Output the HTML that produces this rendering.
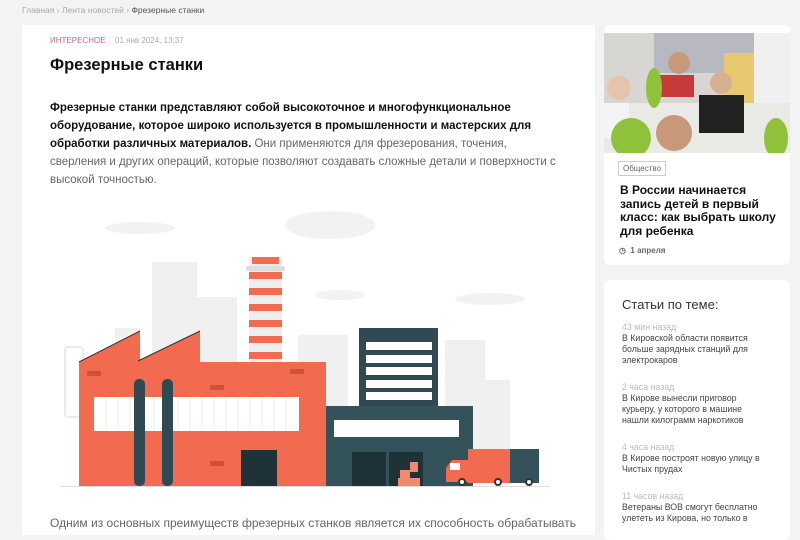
<!DOCTYPE html>
<html><head><meta charset="utf-8"><style>
*{margin:0;padding:0;box-sizing:border-box}
body{width:800px;height:526px;overflow:hidden;background:#f3f3f3;font-family:"Liberation Sans",sans-serif;position:relative}
.abs{position:absolute}
.crumb{left:22px;top:5px;font-size:8.5px;color:#aaa}
.crumb b{font-weight:normal;color:#555}
.main{left:22px;top:25px;width:573px;height:510px;background:#fff}
.cat{left:50px;top:36px;font-size:8px;color:#c56a8a}
.date{left:115px;top:36px;font-size:8px;color:#aaa}
h1{position:absolute;left:50px;top:56px;font-size:16.5px;color:#111;font-weight:bold}
.p{left:50px;top:99px;width:540px;font-size:11.5px;line-height:18px;color:#666;white-space:nowrap}
.p b{color:#111}
.p2{left:50px;top:516px;font-size:12px;color:#666;white-space:nowrap}
.card{background:#fff;border-radius:6px}
.tag{left:618px;top:161px;border:1px solid #ccc;font-size:8px;color:#666;padding:2px 4px}
.nt{left:620px;top:184px;width:170px;font-size:12px;line-height:13.7px;font-weight:bold;color:#111;white-space:nowrap}
.ndate{left:619px;top:246px;font-size:8px;color:#666;font-weight:bold}
.st{left:622px;top:297px;font-size:13px;color:#333}
.it{left:622px;width:170px;font-size:8.8px;line-height:11px;color:#444;white-space:nowrap}
.it span{display:block;color:#bbb}
</style></head><body>
<div class="abs crumb">Главная › Лента новостей › <b>Фрезерные станки</b></div>
<div class="abs main"></div>
<div class="abs cat">ИНТЕРЕСНОЕ</div>
<div class="abs date">01 янв 2024, 13:37</div>
<h1>Фрезерные станки</h1>
<div class="abs p"><b>Фрезерные станки представляют собой высокоточное и многофункциональное<br>оборудование, которое широко используется в промышленности и мастерских для<br>обработки различных материалов.</b> Они применяются для фрезерования, точения,<br>сверления и других операций, которые позволяют создавать сложные детали и поверхности с<br>высокой точностью.</div>

<svg class="abs" style="left:0;top:0" width="600" height="526">
<g fill="#f2f2f2">
<ellipse cx="140" cy="228" rx="35" ry="6"/><ellipse cx="330" cy="225" rx="45" ry="14"/>
<ellipse cx="490" cy="299" rx="35" ry="6"/><ellipse cx="340" cy="295" rx="25" ry="5"/>
</g>
<g fill="#f0f0f0">
<rect x="152" y="262" width="45" height="100"/><rect x="115" y="328" width="25" height="35"/>
<rect x="195" y="297" width="42" height="70"/><rect x="298" y="335" width="50" height="80"/>
<rect x="445" y="340" width="40" height="110"/><rect x="480" y="380" width="30" height="70"/>
<rect x="65" y="347" width="18" height="70" rx="3" fill="none" stroke="#eaeaea" stroke-width="2"/>
</g>
<path d="M79 362 L140 331 L140 362 L138 361 L200 331 L200 362 L326 362 L326 486 L79 486Z" fill="#f26b50"/>
<path d="M79 362 L140 331 M138 361 L200 331" stroke="#333" stroke-width="1"/>
<rect x="94" y="397" width="205" height="34" fill="#fff"/>
<g stroke="#eee" stroke-width="1">
<path d="M106 397v34M118 397v34M130 397v34M154 397v34M178 397v34M190 397v34M202 397v34M214 397v34M226 397v34M238 397v34M250 397v34M262 397v34M274 397v34M286 397v34"/></g>
<rect x="134" y="379" width="11" height="107" rx="5" fill="#2f4a52"/>
<rect x="162" y="379" width="11" height="107" rx="5" fill="#2f4a52"/>
<rect x="241" y="450" width="36" height="36" fill="#1f3238"/>
<g fill="#d2503a"><rect x="87" y="371" width="14" height="5"/><rect x="210" y="385" width="14" height="5"/><rect x="290" y="369" width="14" height="5"/><rect x="210" y="461" width="14" height="5"/></g>
<rect x="249" y="257" width="33" height="105" fill="#eee"/>
<g fill="#f26b50"><rect x="252" y="257" width="27" height="7"/><rect x="249" y="272" width="33" height="7"/><rect x="249" y="288" width="33" height="7"/><rect x="249" y="304" width="33" height="7"/><rect x="249" y="320" width="33" height="7"/><rect x="249" y="336" width="33" height="7"/><rect x="249" y="352" width="33" height="7"/></g>
<rect x="246" y="266" width="39" height="5" rx="2" fill="#ddd"/>
<rect x="359" y="328" width="79" height="80" fill="#2f4a52"/>
<g fill="#fff"><rect x="366" y="342" width="66" height="8"/><rect x="366" y="355" width="66" height="8"/><rect x="366" y="367" width="66" height="8"/><rect x="366" y="380" width="66" height="8"/><rect x="366" y="392" width="66" height="8"/></g>
<rect x="326" y="406" width="147" height="80" fill="#34525a"/>
<rect x="334" y="420" width="125" height="17" fill="#fff"/>
<rect x="352" y="452" width="34" height="34" fill="#1f3238"/><rect x="389" y="452" width="34" height="34" fill="#1f3238"/>
<g fill="#f08a6a"><rect x="400" y="470" width="10" height="8"/><rect x="410" y="462" width="8" height="10"/><rect x="398" y="478" width="22" height="8"/></g>
<rect x="468" y="449" width="43" height="34" fill="#f26b50"/>
<rect x="510" y="449" width="29" height="34" fill="#34525a"/>
<path d="M446 482 L446 468 L452 460 L468 460 L468 482Z" fill="#f26b50"/>
<rect x="450" y="463" width="10" height="7" fill="#fff"/>
<g fill="#fff" stroke="#333" stroke-width="2"><circle cx="462" cy="482" r="3"/><circle cx="498" cy="482" r="3"/><circle cx="529" cy="482" r="3"/></g>
<rect x="60" y="486" width="490" height="1" fill="#ddd"/>
</svg>
<div class="abs p2">Одним из основных преимуществ фрезерных станков является их способность обрабатывать</div>

<div class="abs card" style="left:604px;top:25px;width:186px;height:240px"></div>
<svg class="abs" style="left:604px;top:33px" width="186" height="120">
<rect width="186" height="120" fill="#d8d6d2"/>
<rect x="50" y="0" width="100" height="40" fill="#b8b8c0"/>
<rect x="120" y="20" width="30" height="60" fill="#e8c870"/>
<rect x="150" y="0" width="36" height="100" fill="#f0f0f0"/>
<rect x="0" y="70" width="186" height="50" fill="#e9e9e6"/>
<circle cx="75" cy="30" r="11" fill="#c89a7c"/><rect x="55" y="42" width="35" height="22" fill="#c83a3a"/>
<circle cx="117" cy="50" r="11" fill="#d8b090"/><rect x="95" y="62" width="45" height="38" fill="#222"/>
<circle cx="15" cy="55" r="12" fill="#e4c4aa"/><rect x="0" y="70" width="25" height="35" fill="#f4f4f4"/>
<circle cx="70" cy="100" r="18" fill="#c8987a"/>
<ellipse cx="27" cy="105" rx="20" ry="20" fill="#8fc23a"/><ellipse cx="50" cy="55" rx="8" ry="20" fill="#8fc23a"/>
<ellipse cx="172" cy="105" rx="12" ry="20" fill="#8fc23a"/>
</svg>
<div class="abs tag">Общество</div>
<div class="abs nt">В России начинается<br>запись детей в первый<br>класс: как выбрать школу<br>для ребенка</div>
<div class="abs ndate">◷&nbsp; 1 апреля</div>

<div class="abs card" style="left:604px;top:280px;width:186px;height:260px"></div>
<div class="abs st">Статьи по теме:</div>
<div class="abs it" style="top:322px"><span>43 мин назад</span>В Кировской области появится<br>больше зарядных станций для<br>электрокаров</div>
<div class="abs it" style="top:382px"><span>2 часа назад</span>В Кирове вынесли приговор<br>курьеру, у которого в машине<br>нашли килограмм наркотиков</div>
<div class="abs it" style="top:442px"><span>4 часа назад</span>В Кирове построят новую улицу в<br>Чистых прудах</div>
<div class="abs it" style="top:491px"><span>11 часов назад</span>Ветераны ВОВ смогут бесплатно<br>улететь из Кирова, но только в</div>
</body></html>
